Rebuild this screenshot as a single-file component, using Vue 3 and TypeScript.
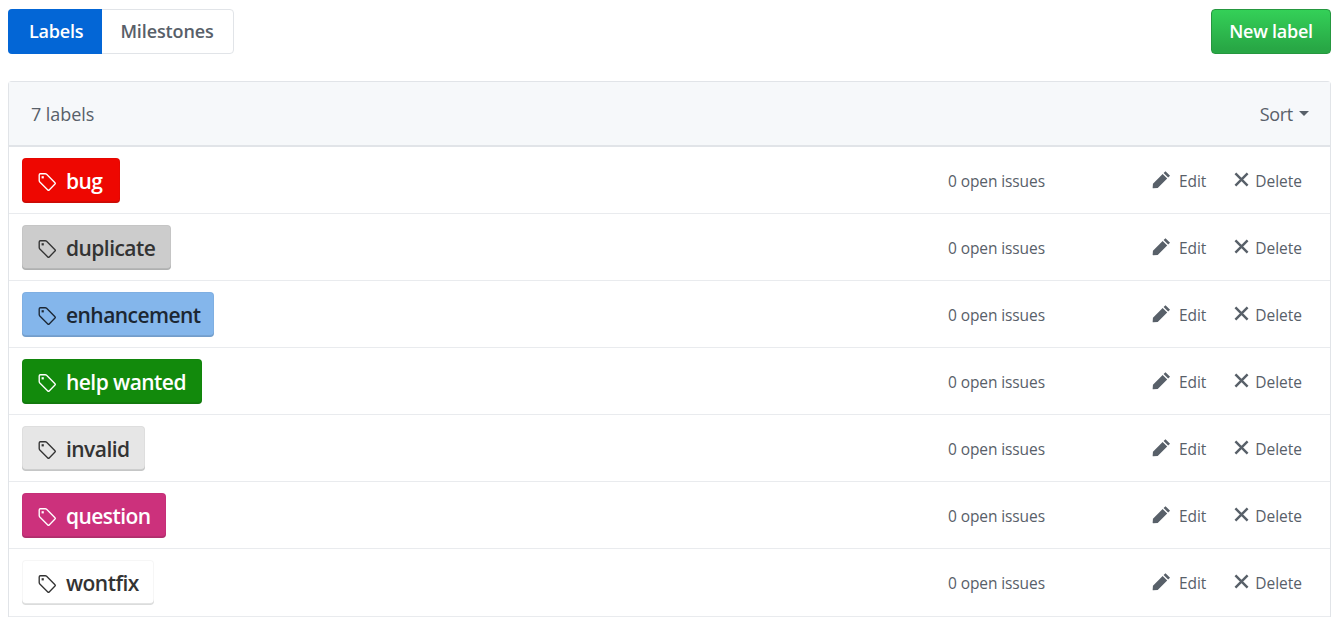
<script setup lang="ts">
interface Label { name: string; bg: string; fg: string; width: number }
const labels: Label[] = [
  { name: 'bug', bg: '#ee0701', fg: '#ffffff', width: 98 },
  { name: 'duplicate', bg: '#cccccc', fg: '#333333', width: 149 },
  { name: 'enhancement', bg: '#84b6eb', fg: '#1c2733', width: 192 },
  { name: 'help wanted', bg: '#128a0c', fg: '#ffffff', width: 180 },
  { name: 'invalid', bg: '#e6e6e6', fg: '#333333', width: 123 },
  { name: 'question', bg: '#cc317c', fg: '#ffffff', width: 144 },
  { name: 'wontfix', bg: '#ffffff', fg: '#333333', width: 132 },
]
</script>

<template>
  <div class="page">
    <div class="top">
      <nav class="tabs">
        <a class="tab active">Labels</a>
        <a class="tab">Milestones</a>
      </nav>
      <button class="new">New label</button>
    </div>
    <section class="box">
      <header class="box-head">
        <span class="count">7 labels</span>
        <span class="sort">Sort<i class="caret"></i></span>
      </header>
      <div v-for="l in labels" :key="l.name" class="row">
        <div class="label-cell">
          <span class="label" :style="{ background: l.bg, color: l.fg, width: l.width + 'px' }">
            <svg class="tag" viewBox="0 0 20 20" fill="none" stroke="currentColor" stroke-width="1.35" stroke-linejoin="round">
              <path d="M2.2 2.9 Q2.2 1.7 3.4 1.7 H8.2 Q9 1.7 9.6 2.3 L18 10.7 Q18.7 11.4 18 12.1 L12.2 17.9 Q11.5 18.6 10.8 17.9 L2.8 9.9 Q2.2 9.3 2.2 8.5 Z" />
              <rect x="4.6" y="4.2" width="2.2" height="2.2" fill="currentColor" stroke="none" />
            </svg>
            {{ l.name }}
          </span>
        </div>
        <span class="issues">0 open issues</span>
        <div class="actions">
          <a class="action edit">
            <svg class="pencil" viewBox="0 0 20 20" fill="currentColor">
              <path d="M14.2 1.2 L19 6 L17 8 L12.2 3.2 Z M11.2 4.2 L16 9 L6 19 L1.2 19.2 Q0.6 19.2 0.7 18.6 L1 14.4 Z" />
            </svg>
            Edit
          </a>
          <a class="action remove">
            <svg class="cross" viewBox="0 0 16 16" fill="none" stroke="currentColor" stroke-width="2.6">
              <path d="M1.5 1.5 L14.5 14.5 M14.5 1.5 L1.5 14.5" />
            </svg>
            Delete
          </a>
        </div>
      </div>
    </section>
  </div>
</template>

<style>
html, body { margin: 0; background: #fff; }
</style>

<style scoped>
.page {
  padding: 9px 6px 0 8px;
  font-family: "Open Sans", "Noto Sans", sans-serif;
  color: #586069;
}
.top {
  display: flex;
  justify-content: space-between;
  align-items: flex-start;
  margin-bottom: 27px;
}
.tabs {
  display: flex;
  height: 45px;
  box-sizing: border-box;
  border: 1px solid #e1e4e8;
  border-radius: 4px;
}
.tab {
  display: flex;
  align-items: center;
  padding: 0 19px 2px 18px;
  font-size: 18px;
  font-weight: 600;
  letter-spacing: -0.12px;
  color: #586069;
}
.tab.active {
  margin: -1px 0 -1px -1px;
  padding: 0 19px 2px 21px;
  background: #0366d6;
  color: #fff;
  border-radius: 4px 0 0 4px;
  letter-spacing: -0.2px;
}
.new {
  width: 120px;
  height: 45px;
  padding: 0 0 2px;
  border: 1px solid #25973f;
  border-radius: 4px;
  background: linear-gradient(#34d058, #28a745 90%);
  color: #fff;
  font: 600 18px "Open Sans", "Noto Sans", sans-serif;
  letter-spacing: -0.25px;
}
.box {
  border: 1px solid #e1e4e8;
  border-bottom: 0;
  border-top-left-radius: 4px;
  border-top-right-radius: 4px;
}
.box-head {
  display: flex;
  justify-content: space-between;
  align-items: center;
  height: 63px;
  padding: 0 21px 0 22px;
  background: #f6f8fa;
  border-bottom: 2px solid #e1e4e8;
  font-size: 18px;
  color: #586069;
}
.count { letter-spacing: -0.05px; }
.sort { display: flex; align-items: center; letter-spacing: -0.3px; }
.caret {
  margin-left: 6px;
  border-top: 5px solid #586069;
  border-left: 5px solid transparent;
  border-right: 5px solid transparent;
}
.row {
  display: flex;
  align-items: center;
  height: 66px;
  padding-left: 13px;
  border-bottom: 1px solid #e9ebee;
}
.row:last-child { padding-bottom: 1px; }
.label-cell { width: 926px; flex: none; }
.label {
  display: inline-flex;
  align-items: center;
  gap: 9px;
  height: 45px;
  box-sizing: border-box;
  padding: 2px 0 0 15px;
  border-radius: 4px;
  box-shadow: inset 0 0 0 1px rgba(27, 31, 35, 0.04), inset 0 -2px 0 rgba(27, 31, 35, 0.12);
  font-size: 21px;
  font-weight: 600;
  letter-spacing: -0.55px;
  white-space: nowrap;
  vertical-align: top;
}
.tag { width: 20px; height: 20px; flex: none; margin-top: 2px; }
.issues {
  flex: none;
  width: 204px;
  padding-top: 2px;
  font-size: 15.5px;
  letter-spacing: -0.1px;
  color: #586069;
}
.actions {
  display: flex;
  gap: 28px;
  padding-top: 2px;
  font-size: 15.5px;
  letter-spacing: -0.05px;
}
.action { display: inline-flex; align-items: center; gap: 8px; color: #586069; }
.remove { gap: 6px; }
.pencil { width: 19px; height: 19px; margin-top: -3px; }
.cross { width: 15px; height: 15px; margin-top: -3px; }
</style>
